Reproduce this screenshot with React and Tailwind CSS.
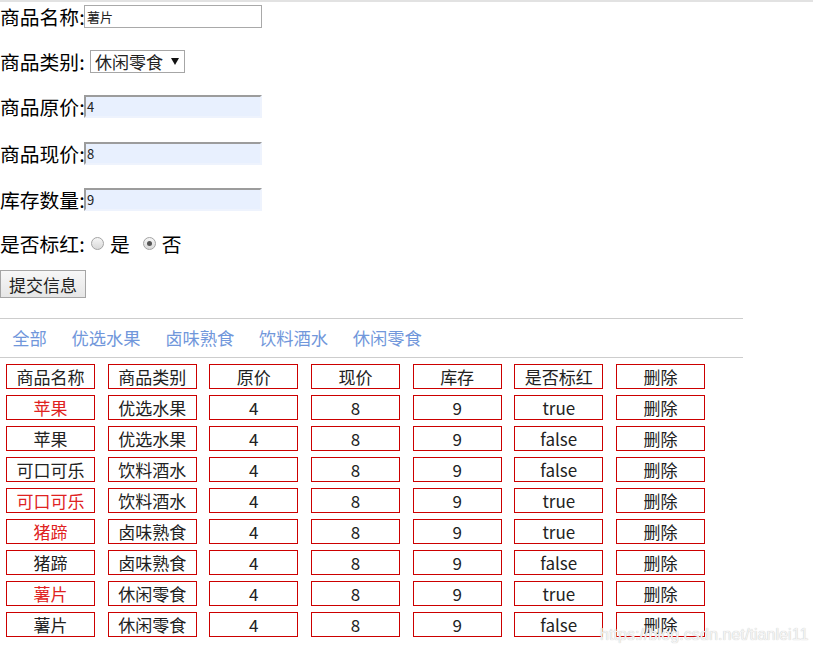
import React from "react";

const rows = [
  ["苹果", "优选水果", true],
  ["苹果", "优选水果", false],
  ["可口可乐", "饮料酒水", false],
  ["可口可乐", "饮料酒水", true],
  ["猪蹄", "卤味熟食", true],
  ["猪蹄", "卤味熟食", false],
  ["薯片", "休闲零食", true],
  ["薯片", "休闲零食", false],
];

const header = ["商品名称", "商品类别", "原价", "现价", "库存", "是否标红", "删除"];

function Cell({ children, red }) {
  return (
    <div
      className={
        "h-[25px] border border-[#cc0000] flex items-center justify-center text-[17px] leading-none " +
        (red ? "text-[#e02222]" : "text-[#222222]")
      }
    >
      {children}
    </div>
  );
}

function Radio({ checked }) {
  return (
    <span className="shrink-0 w-[13px] h-[13px] rounded-full border border-[#a3a3a3] bg-gradient-to-b from-[#f6f6f6] to-[#d9d9d9] flex items-center justify-center">
      {checked && <span className="w-[5px] h-[5px] rounded-full bg-[#555555]" />}
    </span>
  );
}

export default function App() {
  const nav = ["全部", "优选水果", "卤味熟食", "饮料酒水", "休闲零食"];
  return (
    <div className="relative w-[813px] h-[655px] bg-white overflow-hidden text-black font-['Noto_Sans_CJK_SC','Noto_Sans',sans-serif]">
      <div className="h-[2px] bg-[#e2e2e2]" />
      <div className="flex flex-col pt-[3px] text-[19.8px] leading-none">
        <div className="flex items-center h-[23px]">
          <span className="w-[84px] shrink-0 whitespace-nowrap">商品名称:</span>
          <div className="w-[178px] h-[23px] border border-[#a9a9a9] bg-white flex items-center pl-[2px] text-[13px] text-[#222]">
            薯片
          </div>
        </div>
        <div className="flex items-center h-[23px] mt-[22px]">
          <span className="w-[90px] shrink-0 whitespace-nowrap">商品类别:</span>
          <div className="w-[95px] h-[23px] border border-[#a6a6a6] bg-white flex items-center pl-[4px] text-[17px] text-[#222] whitespace-nowrap">
            休闲零食
            <svg className="ml-[8px]" width="8" height="7" viewBox="0 0 8 7">
              <path d="M0 0 L8 0 L4 7 Z" fill="#111" />
            </svg>
          </div>
        </div>
        {[
          ["商品原价:", "4"],
          ["商品现价:", "8"],
          ["库存数量:", "9"],
        ].map(([l, v], i) => (
          <div key={l} className={"flex items-center h-[23px] " + (i === 0 ? "mt-[22px]" : i === 1 ? "mt-[24px]" : "mt-[23px]")}>
            <span className="w-[84px] shrink-0 whitespace-nowrap">{l}</span>
            <div className="w-[178px] h-[23px] border-2 border-t-[#9c9c9c] border-l-[#9c9c9c] border-b-[#eef3fd] border-r-[#eef3fd] bg-[#e8f0fe] flex items-center pl-[1px] text-[13px] text-[#222]">
              {v}
            </div>
          </div>
        ))}
        <div className="flex items-center h-[23px] mt-[21px]">
          <span className="w-[91px] shrink-0 whitespace-nowrap">是否标红:</span>
          <Radio />
          <span className="ml-[6px] mr-[13px]">是</span>
          <Radio checked />
          <span className="ml-[6px]">否</span>
        </div>
        <div className="mt-[15px] w-[86px] h-[28px] border border-[#a5a5a5] bg-gradient-to-b from-[#f7f7f7] to-[#e6e6e6] flex items-center justify-center text-[17px] text-[#222] whitespace-nowrap">
          提交信息
        </div>
      </div>

      <div className="mt-[20px] w-[743px] h-[40px] border-t border-b border-[#cdcdcd] flex items-center">
        {nav.map((n) => (
          <span key={n} className="px-[12.3px] text-[17.3px] leading-none text-[#7197db] whitespace-nowrap">
            {n}
          </span>
        ))}
      </div>

      <div className="mt-[6px] pl-[6px] grid grid-cols-[repeat(7,89px)] gap-x-[12.67px] gap-y-[6px]">
        {header.map((h) => (
          <Cell key={h}>{h}</Cell>
        ))}
        {rows.map(([name, cat, red], i) => (
          <React.Fragment key={i}>
            <Cell red={red}>{name}</Cell>
            <Cell>{cat}</Cell>
            <Cell>4</Cell>
            <Cell>8</Cell>
            <Cell>9</Cell>
            <Cell>{red ? "true" : "false"}</Cell>
            <Cell>删除</Cell>
          </React.Fragment>
        ))}
      </div>

      <div className="absolute left-[600px] top-[626px] text-[16.2px] leading-none font-['Liberation_Sans',sans-serif] text-[#f4f4f4] [text-shadow:0_0_1px_#b8b8b8]">
        https://blog.csdn.net/tianlei11
      </div>
    </div>
  );
}
